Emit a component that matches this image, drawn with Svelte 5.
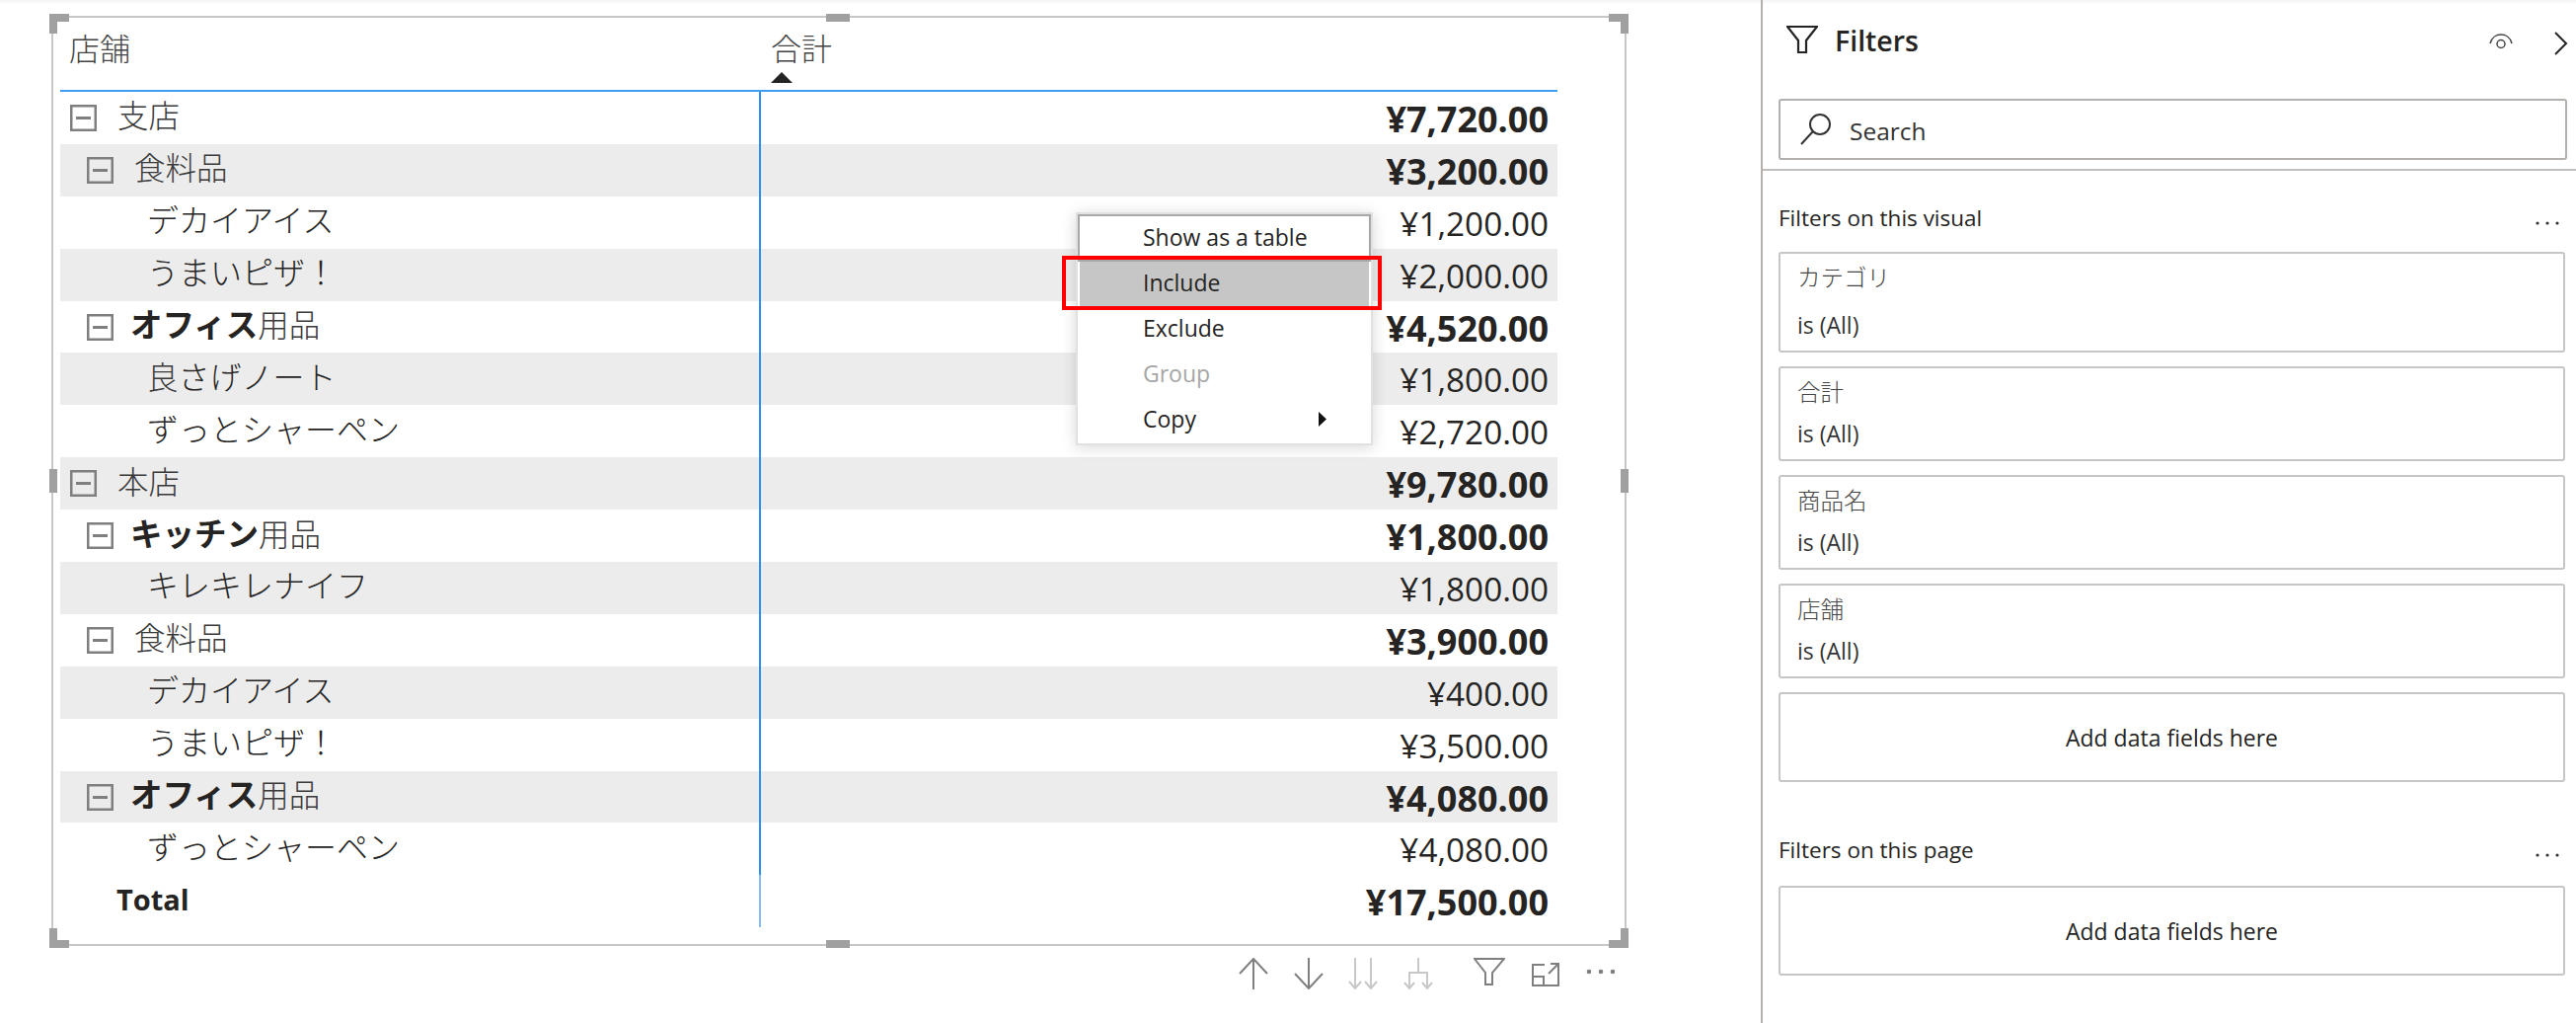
<script>
  const rows = [
    { lvl: 0, parts: [['支店', 'l']], v: '¥7,720.00', b: true },
    { lvl: 1, parts: [['食料品', 'l']], v: '¥3,200.00', b: true },
    { lvl: 2, parts: [['デカイアイス', '']], v: '¥1,200.00' },
    { lvl: 2, parts: [['うまいピザ！', '']], v: '¥2,000.00' },
    { lvl: 1, parts: [['オフィス', 'b'], ['用品', 'l']], v: '¥4,520.00', b: true },
    { lvl: 2, parts: [['良', 'l'], ['さげノート', '']], v: '¥1,800.00' },
    { lvl: 2, parts: [['ずっとシャーペン', '']], v: '¥2,720.00' },
    { lvl: 0, parts: [['本店', 'l']], v: '¥9,780.00', b: true },
    { lvl: 1, parts: [['キッチン', 'b'], ['用品', 'l']], v: '¥1,800.00', b: true },
    { lvl: 2, parts: [['キレキレナイフ', '']], v: '¥1,800.00' },
    { lvl: 1, parts: [['食料品', 'l']], v: '¥3,900.00', b: true },
    { lvl: 2, parts: [['デカイアイス', '']], v: '¥400.00' },
    { lvl: 2, parts: [['うまいピザ！', '']], v: '¥3,500.00' },
    { lvl: 1, parts: [['オフィス', 'b'], ['用品', 'l']], v: '¥4,080.00', b: true },
    { lvl: 2, parts: [['ずっとシャーペン', '']], v: '¥4,080.00' }
  ];
  const filters = ['カテゴリ', '合計', '商品名', '店舗'];
</script>

<div class="page">
  <main class="canvas">
    <section class="frame">
      <i class="h tl"></i><i class="h tr"></i><i class="h bl"></i><i class="h br"></i>
      <i class="h tm"></i><i class="h bm"></i><i class="h lm"></i><i class="h rm"></i>

      <div class="table">
        <div class="head">
          <div class="hcell first">店舗</div>
          <div class="hcell second">
            <span>合計</span>
            <svg class="sort" width="22" height="11" viewBox="0 0 22 11"><path d="M11 0 22 11H0z" fill="#252423"/></svg>
          </div>
        </div>
        {#each rows as r, i}
          <div class="row" class:band={i % 2 === 1}>
            <div class="label lvl{r.lvl}">
              {#if r.lvl < 2}
                <svg class="exp" width="27" height="27" viewBox="0 0 27 27"><rect x="1.25" y="1.25" width="24.5" height="24.5" fill="none" stroke="#7f7f7f" stroke-width="2.5"/><rect x="6" y="12" width="15" height="3" fill="#7f7f7f"/></svg>
              {/if}
              <span class="txt">{#each r.parts as p}<span class={p[1]}>{p[0]}</span>{/each}</span>
            </div>
            <div class="val" class:bold={r.b}>{r.v}</div>
          </div>
        {/each}
        <div class="row total">
          <div class="label lvl0 tot"><span class="txt b">Total</span></div>
          <div class="val bold">¥17,500.00</div>
        </div>
      </div>

      <div class="menu">
        <div class="mi first">Show as a table</div>
        <div class="mi active">Include</div>
        <div class="mi">Exclude</div>
        <div class="mi off">Group</div>
        <div class="mi">Copy<svg class="sub" width="8" height="15" viewBox="0 0 8 15"><path d="M0 0 8 7.5 0 15z" fill="#111"/></svg></div>
      </div>
      <div class="redbox"></div>
    </section>

    <div class="tools">
      <svg width="30" height="32" viewBox="0 0 30 32" fill="none" stroke="#7f7f7f" stroke-width="2"><path d="M15 32V1M1 16 15 1 29 16"/></svg>
      <svg width="30" height="32" viewBox="0 0 30 32" fill="none" stroke="#7f7f7f" stroke-width="2"><path d="M15 0V31M1 16 15 31 29 16"/></svg>
      <svg width="30" height="32" viewBox="0 0 30 32" fill="none" stroke="#c8c8c8" stroke-width="2"><path d="M7 0V31M1 24 7 31 13 24M23 0V31M17 24 23 31 29 24"/></svg>
      <svg width="30" height="32" viewBox="0 0 30 32" fill="none" stroke="#c8c8c8" stroke-width="2"><path d="M15 0V15M6 31V15H24V31M1 25 6 31 11 25M19 25 24 31 29 25"/></svg>
      <svg class="gapped" width="32" height="28" viewBox="0 0 32 28" fill="none" stroke="#7f7f7f" stroke-width="2"><path d="M1 1H31L19 15V27H12V15Z"/></svg>
      <svg width="30" height="26" viewBox="0 0 30 26" fill="none" stroke="#7f7f7f" stroke-width="2"><path d="M14 3H2V24H28V10M2 15H13V24M18 12 28 2M20 2H28V10"/></svg>
      <svg class="dots" width="30" height="32" viewBox="0 0 30 32" fill="#7f7f7f"><circle cx="3" cy="14" r="2.3"/><circle cx="15" cy="14" r="2.3"/><circle cx="27" cy="14" r="2.3"/></svg>
    </div>
  </main>

  <aside class="pane">
    <header class="ptitle">
      <svg width="32" height="28" viewBox="0 0 32 28" fill="none" stroke="#252423" stroke-width="2.2"><path d="M1 1H31L20 15V27H12V15Z"/></svg>
      <h2>Filters</h2>
      <svg class="eye" width="24" height="18" viewBox="0 0 24 18" fill="none" stroke="#444" stroke-width="1.5"><path d="M1 10C4 -2 20 -2 23 10"/><circle cx="12" cy="10.5" r="4"/></svg>
      <svg class="chev" width="14" height="24" viewBox="0 0 14 24" fill="none" stroke="#252423" stroke-width="2"><path d="M1 1 12 12 1 23"/></svg>
    </header>
    <div class="search">
      <svg width="32" height="32" viewBox="0 0 32 32" fill="none" stroke="#333" stroke-width="2"><ellipse cx="20" cy="11" rx="10" ry="10"/><path d="M13 18 1 31"/></svg>
      <span>Search</span>
    </div>
    <div class="sep"></div>

    <div class="stitle first-t"><span>Filters on this visual</span>
      <svg width="24" height="6" viewBox="0 0 24 6" fill="#333"><circle cx="2" cy="3" r="1.6"/><circle cx="12" cy="3" r="1.6"/><circle cx="22" cy="3" r="1.6"/></svg>
    </div>
    {#each filters as f, i}
      <div class="card" class:tall={i === 0}>
        <div class="cname">{f}</div>
        <div class="cval">is (All)</div>
      </div>
    {/each}
    <div class="add">Add data fields here</div>

    <div class="stitle second-t"><span>Filters on this page</span>
      <svg width="24" height="6" viewBox="0 0 24 6" fill="#333"><circle cx="2" cy="3" r="1.6"/><circle cx="12" cy="3" r="1.6"/><circle cx="22" cy="3" r="1.6"/></svg>
    </div>
    <div class="add">Add data fields here</div>
  </aside>
</div>

<style>
  :global(body) { margin: 0; background: #fff; }
  .page {
    display: flex;
    width: 2610px;
    height: 1036px;
    overflow: hidden;
    color: #252423;
    font-family: "Open Sans", "Noto Sans CJK JP", sans-serif;
    background: linear-gradient(#f3f3f3, #fff 4px);
  }
  .canvas { width: 1784px; flex: none; padding: 16px 0 0 52px; box-sizing: border-box; }
  .frame {
    position: relative;
    width: 1596px;
    height: 942px;
    box-sizing: border-box;
    border: 2px solid #c8c8c8;
    padding: 0 0 0 7px;
  }
  .h { position: absolute; background: #a0a0a0; display: block; }
  .tl, .tr, .bl, .br { width: 20px; height: 20px; background: none; }
  .tl { left: -4px; top: -4px; border-left: 8px solid #a0a0a0; border-top: 8px solid #a0a0a0; }
  .tr { right: -4px; top: -4px; border-right: 8px solid #a0a0a0; border-top: 8px solid #a0a0a0; }
  .bl { left: -4px; bottom: -4px; border-left: 8px solid #a0a0a0; border-bottom: 8px solid #a0a0a0; }
  .br { right: -4px; bottom: -4px; border-right: 8px solid #a0a0a0; border-bottom: 8px solid #a0a0a0; }
  .tl, .tr, .bl, .br { box-sizing: border-box; }
  .tm, .bm { left: 783px; width: 24px; height: 8px; }
  .tm { top: -4px; }
  .bm { bottom: -4px; }
  .lm, .rm { top: 457px; width: 8px; height: 24px; }
  .lm { left: -4px; }
  .rm { right: -4px; }

  .table { width: 1517px; }
  .head {
    display: flex;
    height: 75px;
    box-sizing: border-box;
    border-bottom: 2px solid #3f9ef8;
    font-size: 31px;
    font-weight: 300;
    color: #444;
  }
  .hcell { position: relative; padding-top: 11px; line-height: 40px; }
  .hcell.first { width: 708px; padding-left: 9px; box-sizing: border-box; }
  .hcell.second { padding-left: 12px; }
  .sort { position: absolute; left: 12px; top: 55px; }

  .row { display: flex; height: 52.9px; }
  .band { background: #ececec; }
  .label {
    width: 708px;
    flex: none;
    box-sizing: border-box;
    display: flex;
    align-items: center;
    font-size: 32px;
    font-weight: 300;
  }
  .label .txt { position: relative; top: -4px; white-space: nowrap; }
  .lvl0 { padding-left: 10px; }
  .lvl1 { padding-left: 27px; }
  .lvl2 { padding-left: 88px; }
  .exp { flex: none; margin-right: 21px; }
  .tot { padding-left: 57px; }
  .l { font-weight: 300; color: #3a3a3a; font-size: 31.5px; }
  .b { font-weight: 700; font-size: 32.5px; margin-left: -4px; }
  .tot .txt { font-size: 29px; top: -2px; margin-left: 0; }
  .val {
    flex: 1;
    border-left: 2px solid #2b8ff5;
    text-align: right;
    padding: 3px 9px 0 0;
    box-sizing: border-box;
    font-size: 33.3px;
    font-weight: 400;
    line-height: 49px;
    white-space: nowrap;
  }
  .val.bold { font-weight: 700; font-size: 36px; }
  .total .val { border-left-color: #86bcf5; }

  .menu {
    position: absolute;
    left: 1036px;
    top: 197px;
    width: 301px;
    box-sizing: border-box;
    background: #fff;
    border: 2px solid #e1e1e1;
    box-shadow: 0 2px 14px rgba(0, 0, 0, .16);
    font-size: 23px;
    color: #252423;
  }
  .mi {
    position: relative;
    height: 46px;
    line-height: 42px;
    padding-left: 66px;
    box-sizing: border-box;
  }
  .mi.first { height: 48px; border: 2px solid #a8a8a8; padding-left: 64px; line-height: 42px; }
  .mi.active { background: #c6c6c6; margin: 0 2px; padding-left: 64px; }
  .mi.off { color: #a6a6a6; }
  .sub { position: absolute; left: 244px; top: 14px; }
  .redbox {
    position: absolute;
    left: 1022px;
    top: 241px;
    width: 324px;
    height: 55px;
    box-sizing: border-box;
    border: 4px solid #f00;
  }

  .tools { display: flex; width: 1596px; box-sizing: border-box; padding: 12px 11px 0 0; justify-content: flex-end; align-items: flex-start; gap: 25.5px; }
  .tools .gapped { margin-left: 16px; }
  .tools .dots { margin-left: 1px; }
  .tools svg:nth-child(6) { margin-top: 4px; }

  .pane {
    flex: 1;
    border-left: 2px solid #b3b0ad;
    box-sizing: border-box;
    padding-left: 16px;
  }
  .ptitle { position: relative; height: 100px; }
  .ptitle > svg:first-child { position: absolute; left: 8px; top: 26px; }
  .ptitle h2 { position: absolute; left: 57px; top: 20px; margin: 0; font-size: 28.5px; line-height: 42px; font-weight: 600; }
  .eye { position: absolute; left: 720px; top: 34px; }
  .chev { position: absolute; left: 786px; top: 32px; }
  .search {
    display: flex;
    align-items: center;
    gap: 18px;
    width: 799px;
    height: 62px;
    box-sizing: border-box;
    border: 2px solid #b3b0ad;
    border-radius: 3px;
    padding-left: 20px;
    font-size: 24.5px;
    color: #333;
  }
  .search span { position: relative; top: 1px; }
  .sep { height: 2px; background: #c0bebc; margin: 9px 0 0 -16px; }
  .stitle {
    width: 797px;
    display: flex;
    justify-content: space-between;
    align-items: center;
    font-size: 22.5px;
    line-height: 30px;
    padding-right: 6px;
    box-sizing: border-box;
  }
  .stitle svg { margin-top: 10px; }
  .first-t { margin-top: 33px; margin-bottom: 19px; }
  .second-t { margin-top: 54px; margin-bottom: 21px; }
  .card {
    width: 797px;
    height: 96px;
    box-sizing: border-box;
    border: 2px solid #c8c6c4;
    border-radius: 3px;
    padding: 8px 0 0 17px;
    margin-bottom: 14px;
  }
  .card.tall { height: 102px; }
  .cname { font-size: 23.5px; line-height: 32px; font-weight: 300; color: #444; }
  .cval { font-size: 23px; line-height: 30px; margin-top: 11px; color: #333; }
  .card.tall .cval { margin-top: 17px; }
  .add {
    width: 797px;
    height: 91px;
    box-sizing: border-box;
    border: 2px solid #c8c6c4;
    border-radius: 3px;
    display: flex;
    align-items: center;
    justify-content: center;
    font-size: 23px;
  }
</style>
